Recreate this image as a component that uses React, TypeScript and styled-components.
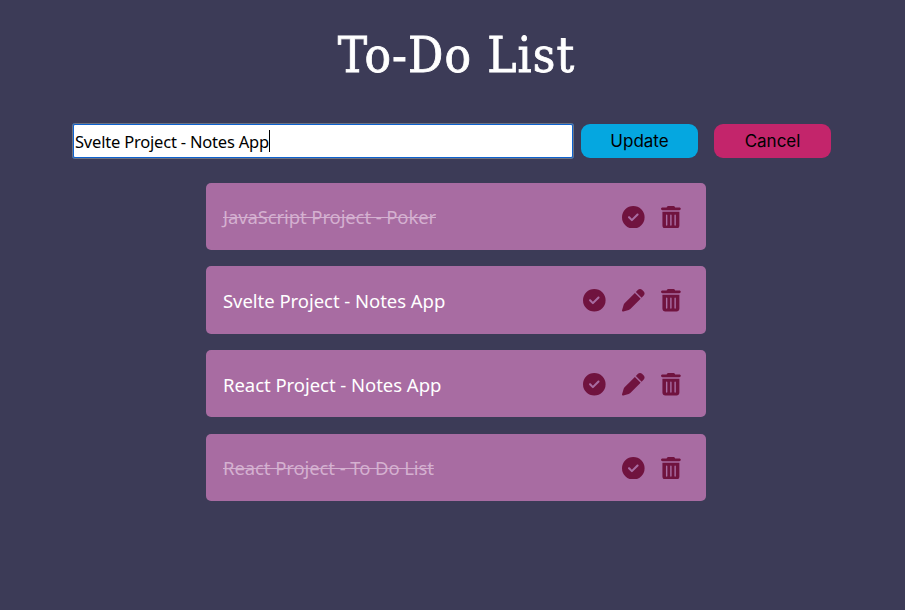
import React from "react";
import styled, { createGlobalStyle } from "styled-components";
import { FaCircleCheck, FaPen, FaTrashCan } from "react-icons/fa6";

const GlobalStyle = createGlobalStyle`
  * { box-sizing: border-box; }
  body {
    margin: 0;
    background: #3c3b57;
    font-family: "Noto Sans", sans-serif;
  }
`;

const Page = styled.main`
  min-height: 610px;
  overflow: hidden;
`;

const Title = styled.h1`
  margin: 24px 0 0 8px;
  height: 64px;
  line-height: 64px;
  text-align: center;
  color: #fff;
  font-family: "Roboto Slab", "DejaVu Serif Condensed", "DejaVu Serif", serif;
  font-size: 49px;
  font-stretch: condensed;
  font-weight: 400;
  letter-spacing: 1.1px;
  -webkit-text-stroke: 0.8px #fff;
  white-space: nowrap;
`;

const Form = styled.div`
  display: flex;
  align-items: center;
  margin: 35px 0 0 72px;
  height: 36px;
`;

const Field = styled.div`
  display: flex;
  align-items: center;
  width: 502px;
  height: 36px;
  padding: 1px 1px 0;
  background: #fff;
  border: 2px solid #0d62d0;
  border-radius: 3px;
  outline: 1px solid #6d7485;
  outline-offset: -1px;
  color: #000;
  font-size: 16.5px;
  letter-spacing: -0.2px;
  white-space: nowrap;
`;

const Caret = styled.span`
  width: 1px;
  height: 22px;
  margin-top: -2px;
  background: #000;
`;

const Button = styled.button<{ $color: string; $gap: number }>`
  width: 117px;
  height: 34px;
  margin: 0 0 0 ${(p) => p.$gap}px;
  padding: 0;
  border: 0;
  border-radius: 9px;
  background: ${(p) => p.$color};
  color: #000;
  font: 400 17px/34px Inter, sans-serif;
`;

const List = styled.ul`
  display: flex;
  flex-direction: column;
  gap: 16.4px;
  width: 500px;
  margin: 23.8px 0 0 206px;
  padding: 0;
  list-style: none;
`;

const Item = styled.li`
  display: flex;
  align-items: center;
  height: 67.2px;
  padding: 0 25px 0 17px;
  border-radius: 5px;
  background: #a86ca2;
`;

const Label = styled.span<{ $done: boolean; $spacing: number }>`
  flex: 1;
  padding-top: 1px;
  font-size: 18.5px;
  letter-spacing: ${(p) => p.$spacing}px;
  white-space: nowrap;
  color: ${(p) => (p.$done ? "#d4b0d0" : "#fff")};
  text-decoration: ${(p) => (p.$done ? "line-through 1px" : "none")};
`;

const Actions = styled.div`
  display: flex;
  gap: 16.5px;
  padding-top: 1.4px;
  color: #70133f;
  font-size: 22.6px;

  svg { display: block; }
  svg:last-child { width: 19.8px; }
`;

const tasks = [
  { text: "JavaScript Project - Poker", done: true, spacing: -0.11 },
  { text: "Svelte Project - Notes App", done: false, spacing: -0.04 },
  { text: "React Project - Notes App", done: false, spacing: -0.04 },
  { text: "React Project - To Do List", done: true, spacing: -0.09 },
];

export default function App() {
  return (
    <Page>
      <GlobalStyle />
      <Title>To-Do List</Title>
      <Form>
        <Field>
          <span>Svelte Project - Notes App</span>
          <Caret />
        </Field>
        <Button $color="#05a7e0" $gap={7}>Update</Button>
        <Button $color="#c3256b" $gap={16}>Cancel</Button>
      </Form>
      <List>
        {tasks.map((task) => (
          <Item key={task.text}>
            <Label $done={task.done} $spacing={task.spacing}>{task.text}</Label>
            <Actions>
              <FaCircleCheck />
              {!task.done && <FaPen />}
              <FaTrashCan />
            </Actions>
          </Item>
        ))}
      </List>
    </Page>
  );
}
